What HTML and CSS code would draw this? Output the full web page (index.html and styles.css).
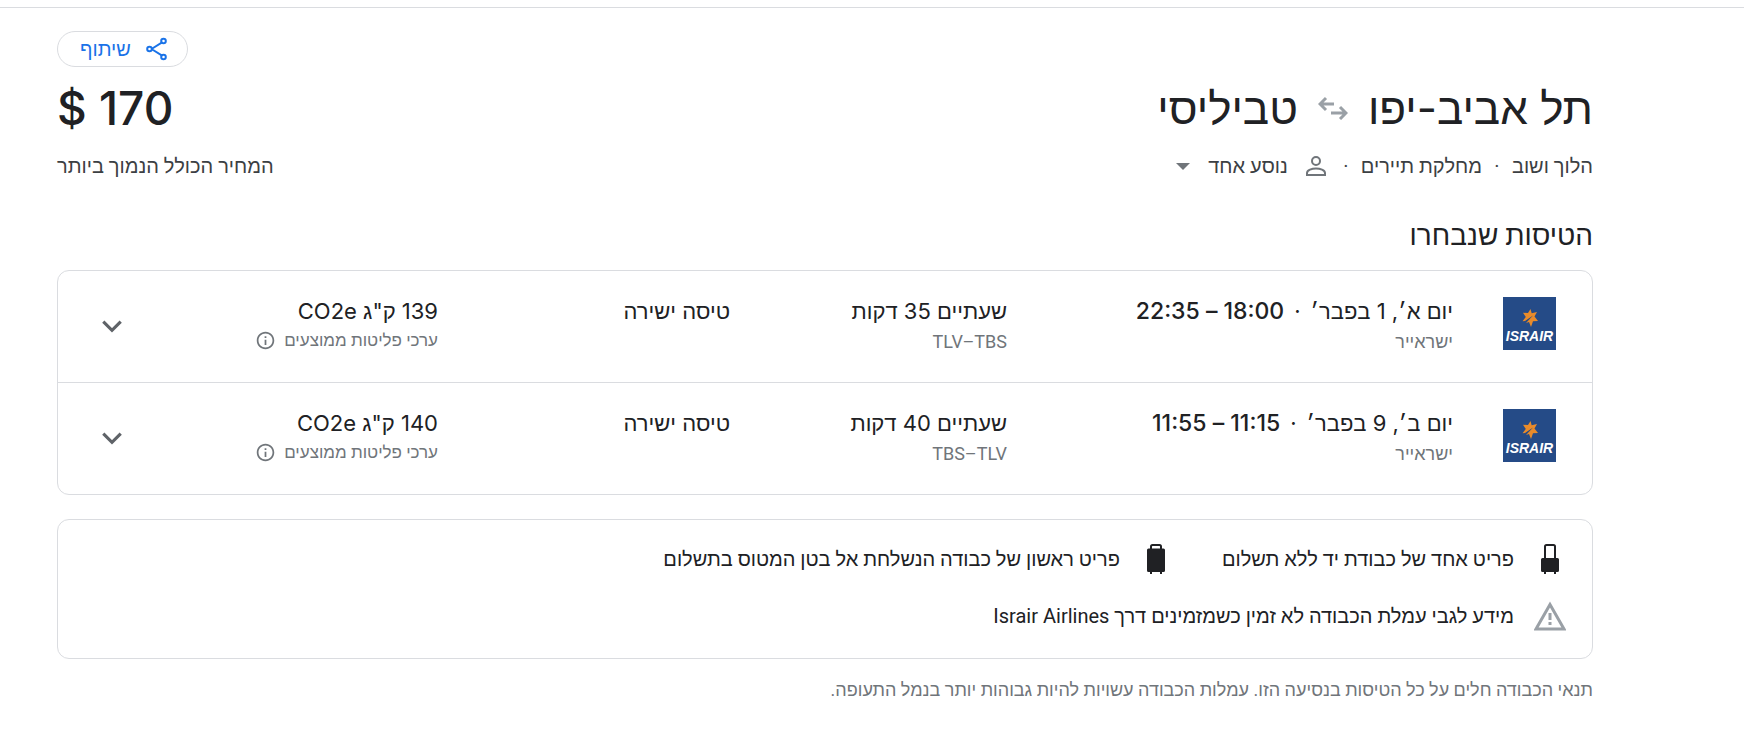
FILE: index.html
```
<!DOCTYPE html>
<html lang="he" dir="rtl">
<head>
    <meta charset="UTF-8">
    <title>תל אביב-יפו – טביליסי</title>
    <link rel="stylesheet" href="styles.css">
</head>
<body>
<!-- shared symbols -->
<svg class="symbols" aria-hidden="true">
    <symbol id="star" viewBox="18 11 18 20">
        <path d="M27.500 12l1.200 4.300 5.300-1.300-2.500 4.500 3.500 4.500-5 .2-2 5.800-2-5-3 1 7-7.500-8 5.500-2.500.2 3.300-4.200-2.800-4.300 5 .3z"/>
    </symbol>
    <symbol id="info" viewBox="0 0 24 24">
        <path d="M11 7h2v2h-2zm0 4h2v6h-2zm1-9C6.480 2 2 6.480 2 12s4.480 10 10 10 10-4.480 10-10S17.520 2 12 2zm0 18c-4.410 0-8-3.590-8-8s3.590-8 8-8 8 3.590 8 8-3.590 8-8 8z"/>
    </symbol>
    <symbol id="chevron" viewBox="0 0 24 24">
        <path d="M6.500 9.300l5.500 5.400 5.500-5.400"/>
    </symbol>
</svg>

<div class="topline"></div>
<main class="page">
    <div class="toolbar">
        <button type="button" class="share">
            <svg class="share-icon" viewBox="0 0 24 24">
                <path d="M6.500 12L17.500 5.200M6.500 12L17.500 18.800"/>
                <circle cx="4.500" cy="12" r="2.300"/>
                <circle cx="18.500" cy="4" r="2.300"/>
                <circle cx="18.500" cy="20" r="2.300"/>
            </svg>
            שיתוף
        </button>
    </div>

    <header class="summary">
        <h1 class="route">
            <span>תל אביב-יפו</span>
            <svg class="swap" viewBox="0 0 30 24">
                <path d="M16 8H2M8 2L2 8l6 6M13 17h15M22 11l6 6-6 6"/>
            </svg>
            <span>טביליסי</span>
        </h1>
        <div class="price">170 $</div>
    </header>

    <div class="details">
        <div class="trip">
            <span>הלוך ושוב</span>
            <span class="dot">·</span>
            <span>מחלקת תיירים</span>
            <span class="dot">·</span>
            <button type="button" class="passengers">
                <svg class="person" viewBox="0 0 20 20">
                    <circle cx="10" cy="5" r="4"/>
                    <path d="M1 19v-2c0-3 5-4.500 9-4.500s9 1.500 9 4.500v2z"/>
                </svg>
                <span>נוסע אחד</span>
                <svg class="caret" viewBox="0 0 14 7"><path d="M0 0h14L7 7z"/></svg>
            </button>
        </div>
        <div class="price-note">המחיר הכולל הנמוך ביותר</div>
    </div>

    <h2 class="section-title">הטיסות שנבחרו</h2>

    <ul class="card flights">
        <li class="flight">
            <div class="logo"><svg class="star"><use href="#star"/></svg><span>ISRAIR</span></div>
            <div class="cell">
                <div class="main">יום א׳, 1 בפבר׳<span class="mid">·</span><span class="time">18:00 – 22:35</span></div>
                <div class="sub">ישראייר</div>
            </div>
            <div class="cell">
                <div class="main">שעתיים 35 דקות</div>
                <div class="sub">TLV–TBS</div>
            </div>
            <div class="cell">
                <div class="main">טיסה ישירה</div>
            </div>
            <div class="cell">
                <div class="main">139 ק"ג CO2e</div>
                <div class="sub emissions">ערכי פליטות ממוצעים <svg class="info"><use href="#info"/></svg></div>
            </div>
            <button type="button" class="expand" aria-label="פרטי הטיסה"><svg class="chevron"><use href="#chevron"/></svg></button>
        </li>
        <li class="flight">
            <div class="logo"><svg class="star"><use href="#star"/></svg><span>ISRAIR</span></div>
            <div class="cell">
                <div class="main">יום ב׳, 9 בפבר׳<span class="mid">·</span><span class="time">11:15 – 11:55</span></div>
                <div class="sub">ישראייר</div>
            </div>
            <div class="cell">
                <div class="main">שעתיים 40 דקות</div>
                <div class="sub">TBS–TLV</div>
            </div>
            <div class="cell">
                <div class="main">טיסה ישירה</div>
            </div>
            <div class="cell">
                <div class="main">140 ק"ג CO2e</div>
                <div class="sub emissions">ערכי פליטות ממוצעים <svg class="info"><use href="#info"/></svg></div>
            </div>
            <button type="button" class="expand" aria-label="פרטי הטיסה"><svg class="chevron"><use href="#chevron"/></svg></button>
        </li>
    </ul>

    <ul class="card baggage">
        <li class="bag">
            <svg class="bag-icon" viewBox="0 0 32 32">
                <path d="M11 16V3.500Q11 2 12.500 2h7Q21 2 21 3.500V16" fill="none" stroke="#202124" stroke-width="2"/>
                <path fill="#202124" d="M8.500 15h15q1.500 0 1.500 1.500v11q0 1.500-1.500 1.500H22v2h-2v-2h-8v2h-2v-2H8.500Q7 29 7 27.500v-11Q7 15 8.500 15z"/>
            </svg>
            <span>פריט אחד של כבודת יד ללא תשלום</span>
        </li>
        <li class="bag">
            <svg class="bag-icon" viewBox="0 0 32 32">
                <path d="M11 7V3.500Q11 2 12.500 2h7Q21 2 21 3.500V7" fill="none" stroke="#202124" stroke-width="2"/>
                <path fill="#202124" d="M8.500 5.500h15Q25 5.500 25 7v20.500q0 1.500-1.500 1.500H22v2h-2v-2h-8v2h-2v-2H8.500Q7 29 7 27.500V7q0-1.500 1.500-1.500z"/>
            </svg>
            <span>פריט ראשון של כבודה הנשלחת אל בטן המטוס בתשלום</span>
        </li>
        <li class="bag bag-wide">
            <svg class="bag-icon" viewBox="0 0 32 32">
                <path d="M16 4.500L2 29h28z" fill="none" stroke="#9aa0a6" stroke-width="3"/>
                <path d="M14.500 13h3v7h-3zM14.500 22h3v3h-3z" fill="#9aa0a6"/>
            </svg>
            <span>מידע לגבי עמלת הכבודה לא זמין כשמזמינים דרך Israir Airlines</span>
        </li>
    </ul>

    <p class="terms">תנאי הכבודה חלים על כל הטיסות בנסיעה הזו. עמלות הכבודה עשויות להיות גבוהות יותר בנמל התעופה.</p>
</main>
</body>
</html>
```
FILE: styles.css
```
*{
    box-sizing: border-box;
    margin: 0;
    padding: 0;
}
body{
    font-family: Roboto, "Liberation Sans", sans-serif;
    font-size: 20px;
    line-height: 26px;
    color: #202124;
    background: #fff;
}
button{
    font: inherit;
    color: inherit;
    background: none;
    border: 0;
    cursor: pointer;
}
ul{
    list-style: none;
}
.symbols{
    position: absolute;
    width: 0; height: 0;
}
.topline{
    height: 8px;
    border-bottom: 1px solid #dadce0;
}
.page{
    margin: 0 151px 0 57px;
    padding-top: 23px;
}
.toolbar{
    display: flex;
    justify-content: flex-end;
}
.share{
    display: flex;
    align-items: center;
    gap: 14px;
    height: 36px;
    padding: 0 18px 0 22px;
    border: 1px solid #dadce0;
    border-radius: 18px;
    color: #1a73e8;
}
.share-icon{
    width: 24px; height: 24px;
    fill: none;
    stroke: #1a73e8;
    stroke-width: 2;
}
.summary{
    display: flex;
    justify-content: space-between;
    align-items: center;
    margin-top: 9px;
    height: 64px;
    font-family: Inter, "Liberation Sans", sans-serif;
    font-size: 46px;
    line-height: 64px;
}
.route{
    display: flex;
    align-items: center;
    gap: 20px;
    font-size: 44px;
    font-weight: 400;
}
.swap{
    width: 30px; height: 24px;
    fill: none;
    stroke: #9aa0a6;
    stroke-width: 3;
}
.price{
    font-weight: 500;
}
.details{
    display: flex;
    justify-content: space-between;
    margin-top: 13px;
    color: #3c4043;
}
.trip,
.passengers{
    display: flex;
    align-items: center;
}
.dot{
    width: 30px;
    text-align: center;
}
.passengers{
    gap: 18px;
    margin-right: 5px;
}
.person{
    width: 20px; height: 20px;
    fill: none;
    stroke: #70757a;
    stroke-width: 2;
}
.caret{
    width: 14px; height: 7px;
    fill: #70757a;
}
.section-title{
    margin-top: 37px;
    font-size: 28px;
    line-height: 40px;
    font-weight: 400;
}
.card{
    border: 1px solid #dadce0;
    border-radius: 12px;
}
.flights{
    margin-top: 14px;
}
.flight{
    display: grid;
    grid-template-columns: 103px 446fr 277fr 292fr 302fr 48px;
    padding: 26px 36px 27px 30px;
}
.flight + .flight{
    border-top: 1px solid #dadce0;
}
.logo{
    display: flex;
    flex-direction: column;
    align-items: center;
    width: 53px; height: 53px;
    padding-top: 11px;
    background: #254b87;
    color: #fff;
    font: italic 700 14px/16px "Liberation Sans", sans-serif;
}
.star{
    width: 18px; height: 20px;
    fill: #e98b2a;
}
.main{
    font-family: Inter, "Liberation Sans", sans-serif;
    font-size: 22px;
    line-height: 28px;
}
.mid{
    padding: 0 10px;
}
.time{
    font-size: 23px;
    font-weight: 500;
}
.sub{
    margin-top: 4px;
    font-size: 18px;
    line-height: 26px;
    color: #70757a;
}
.emissions{
    display: flex;
    align-items: center;
    gap: 8px;
    margin-top: 2px;
    font-size: 17px;
}
.info{
    width: 21px; height: 21px;
    fill: #70757a;
}
.expand{
    display: flex;
    align-items: center;
    justify-content: center;
}
.chevron{
    width: 38px; height: 38px;
    fill: none;
    stroke: #5f6368;
    stroke-width: 2;
}
.baggage{
    display: flex;
    flex-wrap: wrap;
    gap: 25px 50px;
    margin-top: 24px;
    padding: 23px 26px 26px;
}
.bag{
    display: flex;
    align-items: center;
    gap: 20px;
}
.bag-wide{
    width: 100%;
}
.bag-icon{
    width: 32px; height: 32px;
}
.terms{
    margin-top: 18px;
    font-size: 18px;
    color: #70757a;
}
```
